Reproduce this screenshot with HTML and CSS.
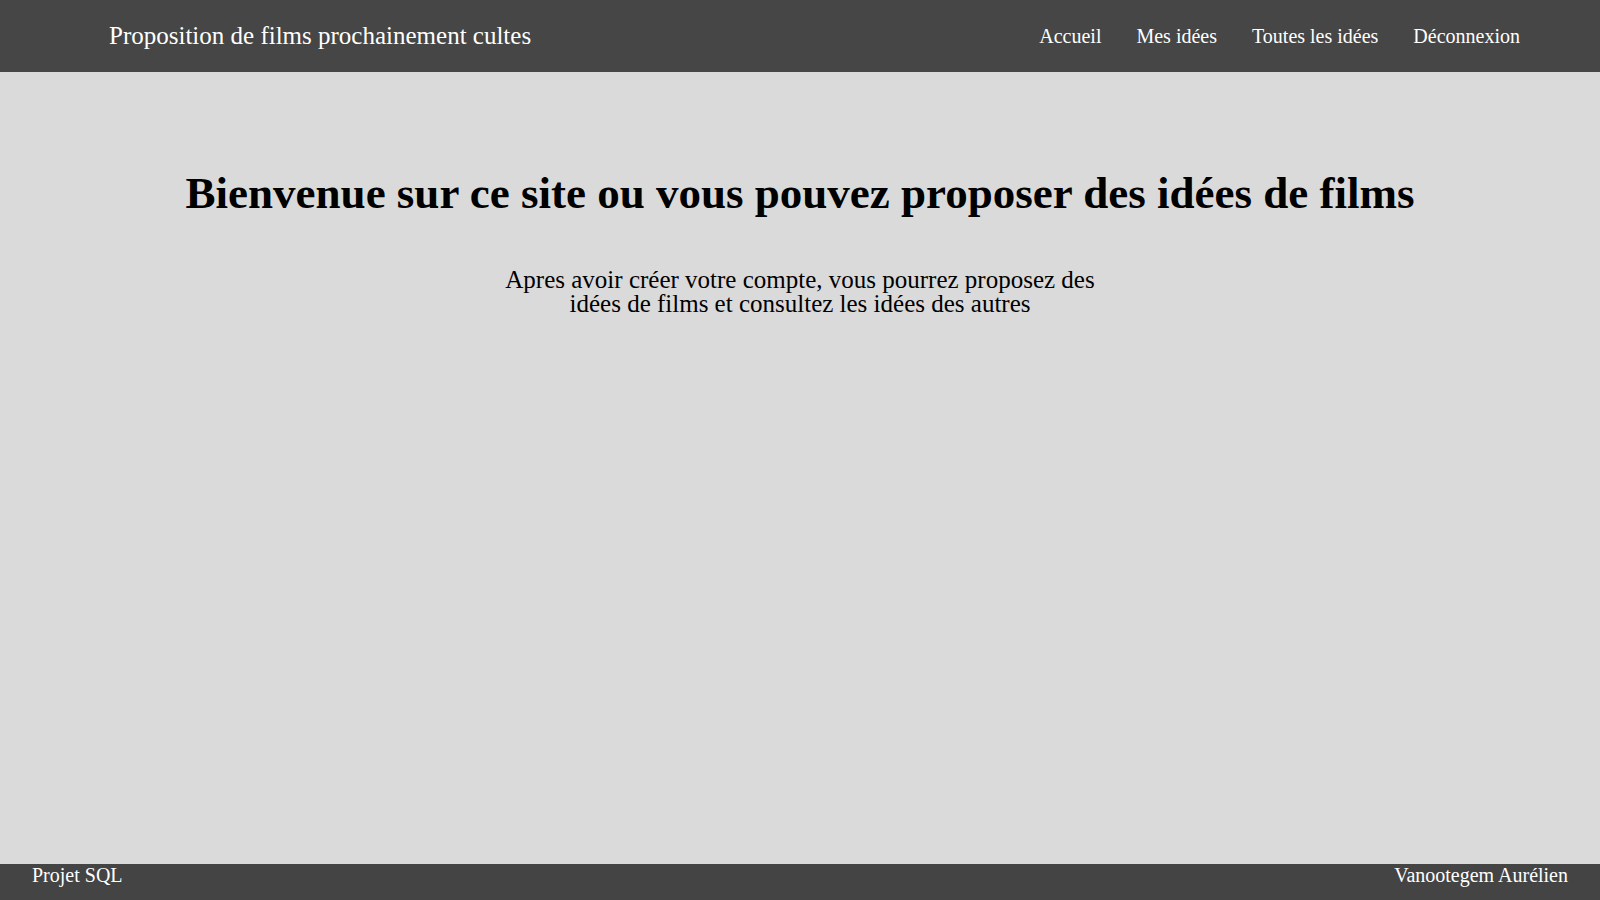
FILE: index.html
```html
<!DOCTYPE html>
<html lang="fr">
<head>
<meta charset="utf-8">
<title>Proposition de films prochainement cultes</title>
<link rel="stylesheet" href="styles.css">
</head>
<body>
<header class="topbar">
  <div class="brand">Proposition de films prochainement cultes</div>
  <nav class="nav">
    <a class="nav-link" href="#">Accueil</a>
    <a class="nav-link" href="#">Mes idées</a>
    <a class="nav-link" href="#">Toutes les idées</a>
    <a class="nav-link" href="#">Déconnexion</a>
  </nav>
</header>
<main class="content">
  <h1 class="headline">Bienvenue sur ce site ou vous pouvez proposer des idées de films</h1>
  <p class="intro">Apres avoir créer votre compte, vous pourrez proposez des idées de films et consultez les idées des autres</p>
</main>
<footer class="bottombar">
  <span class="foot-text">Projet SQL</span>
  <span class="foot-text">Vanootegem Aurélien</span>
</footer>
</body>
</html>
```

FILE: styles.css
```css
html, body {
  margin: 0;
  padding: 0;
}

body {
  min-height: 100vh;
  display: flex;
  flex-direction: column;
  background: #dadada;
  font-family: "Liberation Serif", "Times New Roman", serif;
  color: #000;
}

.topbar {
  height: 72px;
  flex: none;
  display: flex;
  align-items: center;
  justify-content: space-between;
  padding: 0 80px 0 109px;
  background: #464646;
  color: #fff;
}

.brand {
  font-size: 25px;
}

.nav {
  display: flex;
  align-items: center;
  gap: 35px;
}

.nav-link {
  color: #fff;
  text-decoration: none;
  font-size: 20px;
}

.content {
  flex: 1;
  display: flex;
  flex-direction: column;
  align-items: center;
  padding-top: 95px;
}

.headline {
  margin: 0;
  font-size: 45px;
  font-weight: bold;
  text-align: center;
}

.intro {
  margin: 49px 0 0;
  max-width: 610px;
  font-size: 25px;
  line-height: 24px;
  text-align: center;
}

.bottombar {
  height: 36px;
  flex: none;
  display: flex;
  justify-content: space-between;
  align-items: flex-start;
  padding: 0 32px;
  background: #444444;
  color: #fff;
}

.foot-text {
  font-size: 20px;
}
```
